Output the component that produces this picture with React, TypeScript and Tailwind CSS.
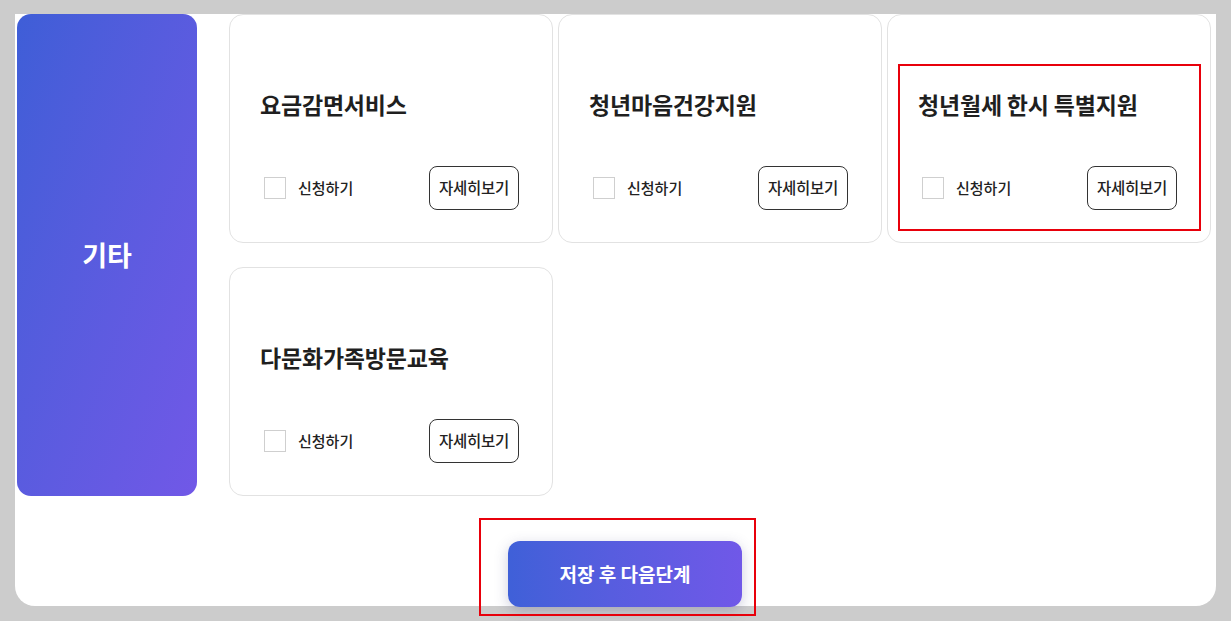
import React from "react";

const font = { fontFamily: '"Noto Sans CJK KR", "Noto Sans", sans-serif' };

function Card({ title, highlight }: { title: string; highlight?: boolean }) {
  return (
    <div className="relative w-[324px] h-[229px] rounded-[14px] border border-[#e2e2e2] bg-white px-[30px] pt-[74px] box-border">
      <div className="text-[23px] leading-[30px] font-bold text-[#1f1f1f] tracking-[-0.2px]">{title}</div>
      <div className="mt-[47px] flex items-center justify-between pl-[4px] pr-[3px]">
        <label className="flex items-center gap-[12px]">
          <span className="block w-[22px] h-[22px] border border-[#cfcfcf] bg-white" />
          <span className="text-[15px] text-[#222] font-medium">신청하기</span>
        </label>
        <button className="w-[90px] h-[44px] rounded-[8px] border border-[#333] bg-white text-[15.5px] font-medium text-[#222] tracking-[-0.3px]">
          자세히보기
        </button>
      </div>
      {highlight && (
        <div className="absolute left-[10px] top-[49px] w-[303px] h-[167px] border-2 border-[#e8000b] pointer-events-none" />
      )}
    </div>
  );
}

export default function App() {
  return (
    <div className="w-[1231px] h-[621px] bg-[#cccccc] overflow-hidden" style={font}>
      <div className="ml-[15px] mt-[14px] w-[1201px] h-[592px] bg-white rounded-b-[20px] relative">
        <div className="flex pl-[2px]">
          <div className="w-[180px] h-[482px] rounded-[14px] bg-gradient-to-br from-[#3e5ed7] to-[#7158e7] flex items-center justify-center">
            <span className="text-white text-[27px] font-bold">기타</span>
          </div>
          <div className="ml-[32px] grid grid-cols-[324px_324px_324px] gap-x-[5px] gap-y-[24px] content-start">
            <Card title="요금감면서비스" />
            <Card title="청년마음건강지원" />
            <Card title="청년월세 한시 특별지원" highlight />
            <Card title="다문화가족방문교육" />
          </div>
        </div>
        <div className="mt-[45px] ml-[493px] relative w-[234px]">
          <button className="w-[234px] h-[66px] rounded-[12px] bg-gradient-to-r from-[#3f60d8] to-[#7058e8] text-white text-[19px] font-bold shadow-[0_4px_14px_rgba(60,60,120,0.25)]">
            저장 후 다음단계
          </button>
          <div className="absolute left-[-29px] top-[-23px] w-[277px] h-[98px] border-2 border-[#e8000b] pointer-events-none" />
        </div>
      </div>
    </div>
  );
}
